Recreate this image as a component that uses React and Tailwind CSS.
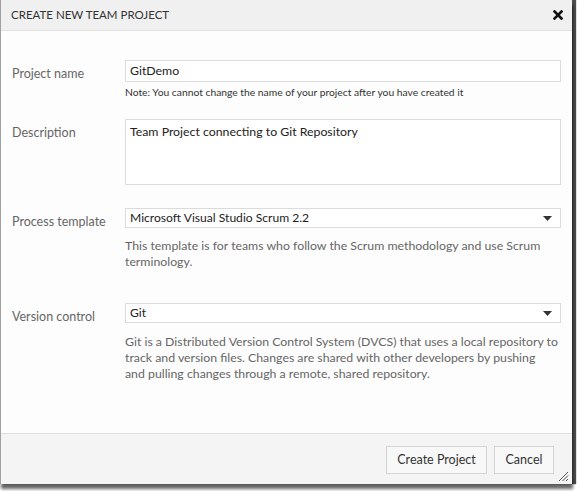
import React from 'react';

const font = { fontFamily: 'Lato, "Open Sans", sans-serif' };

function Caret() {
  return (
    <svg width="9" height="5" viewBox="0 0 9 5" className="block">
      <path d="M0 0 L9 0 L4.5 5 Z" fill="#333" />
    </svg>
  );
}

function Select({ value }) {
  return (
    <div className="h-[20px] border border-[#dcdcdc] bg-white flex items-center justify-between pl-[4px] pr-[8px] text-[12.1px] text-[#222]">
      <span>{value}</span>
      <Caret />
    </div>
  );
}

export default function App() {
  return (
    <div className="w-[577px] h-[491px] bg-white overflow-hidden" style={font}>
      <div className="w-[572px] h-[484px] flex flex-col bg-[#fdfdfd] border-l border-[#a0a0a0] shadow-[4px_0_1px_rgba(0,0,0,0.7),1px_5px_3px_rgba(0,0,0,0.6)] relative">
        {/* Header */}
        <div className="h-[31px] shrink-0 bg-[#f0f0f0] border-b border-[#e2e2e2] flex items-center justify-between pl-[10px] pr-[9px]">
          <span className="text-[11.5px] text-[#333]">CREATE NEW TEAM PROJECT</span>
          <svg width="10" height="10" viewBox="0 0 10 10">
            <path d="M1.5 1.5 L8.5 8.5 M8.5 1.5 L1.5 8.5" stroke="#111" strokeWidth="2.6" strokeLinecap="square" />
          </svg>
        </div>

        {/* Body */}
        <div className="flex-1 pt-[29px] pr-[11px]">
          <div className="grid grid-cols-[124px_1fr]">
            <div className="pl-[11px] pt-[6px] text-[12.5px] leading-[16px] text-[#666]">Project name</div>
            <div>
              <div className="h-[22px] border border-[#dcdcdc] bg-white flex items-center px-[4px] text-[12.3px] text-[#222]">GitDemo</div>
              <div className="mt-[3px] text-[10.3px] leading-[14px] text-[#333] whitespace-nowrap">
                Note: You cannot change the name of your project after you have created it
              </div>
            </div>

            <div className="pl-[11px] pt-[26px] text-[12.5px] leading-[16px] text-[#666]">Description</div>
            <div className="pt-[20px]">
              <div className="h-[66px] border border-[#dcdcdc] bg-white px-[4px] pt-[3px] text-[12.3px] leading-[18px] text-[#222]">
                Team Project connecting to Git Repository
              </div>
            </div>

            <div className="pl-[11px] pt-[29px] text-[12.5px] leading-[16px] text-[#666]">Process template</div>
            <div className="pt-[23px]">
              <Select value="Microsoft Visual Studio Scrum 2.2" />
              <div className="mt-[10px] text-[12.3px] leading-[16px] text-[#666] whitespace-nowrap">
                This template is for teams who follow the Scrum methodology and use Scrum
                <br />
                terminology.
              </div>
            </div>

            <div className="pl-[11px] pt-[39px] text-[12.5px] leading-[16px] text-[#666]">Version control</div>
            <div className="pt-[33px]">
              <Select value="Git" />
              <div className="mt-[11px] text-[12.3px] leading-[16px] text-[#666] whitespace-nowrap">
                Git is a Distributed Version Control System (DVCS) that uses a local repository to
                <br />
                track and version files. Changes are shared with other developers by pushing
                <br />
                and pulling changes through a remote, shared repository.
              </div>
            </div>
          </div>
        </div>

        {/* Footer */}
        <div className="h-[51px] shrink-0 bg-[#f4f4f4] border-t border-[#dedede] flex items-start justify-end gap-[7px] pt-[12px] pr-[18px]">
          <button className="h-[28px] w-[101px] border border-[#d4d4d4] bg-[#f8f8f8] text-[12.5px] text-[#333]">Create Project</button>
          <button className="h-[28px] w-[60px] border border-[#d4d4d4] bg-[#f8f8f8] text-[12.5px] text-[#333]">Cancel</button>
        </div>

        <svg width="11" height="11" viewBox="0 0 11 11" className="absolute right-[3px] bottom-[2px]">
          <path d="M10 1 L1 10 M10 4.5 L4.5 10 M10 8 L8 10" stroke="#555" strokeWidth="1" />
        </svg>
      </div>
    </div>
  );
}
